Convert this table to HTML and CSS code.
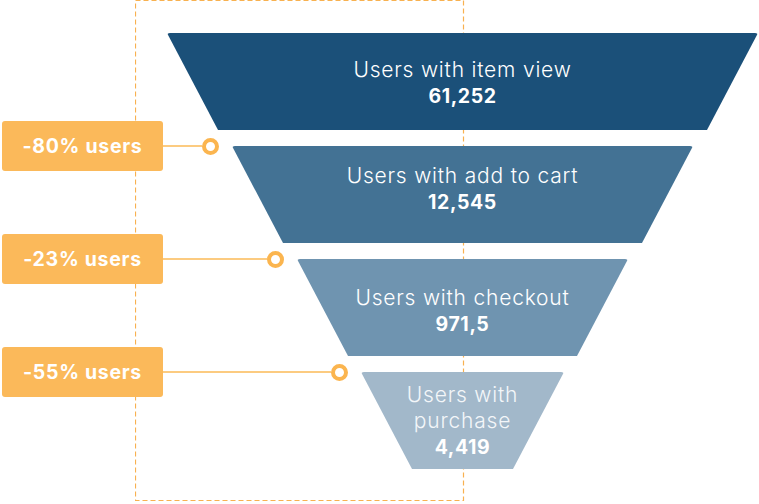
FILE: index.html
```html
<!DOCTYPE html>
<html lang="en">
<head>
<meta charset="utf-8">
<title>Funnel</title>
<link rel="stylesheet" href="styles.css">
</head>
<body>
<div class="chart">
  <svg class="frame" width="330" height="504" viewBox="0 0 330 504">
    <rect x="0.5" y="0.5" width="328" height="500" fill="none" stroke="#F8B150" stroke-width="1.2" stroke-dasharray="5 3"/>
  </svg>
  <div class="stages">
    <div class="stage s1"><div class="label">Users with item view</div><div class="value">61,252</div></div>
    <div class="gap">
      <div class="callout c1"><div class="tag">-80% users</div><div class="line"></div><div class="dot"></div></div>
    </div>
    <div class="stage s2"><div class="label">Users with add to cart</div><div class="value">12,545</div></div>
    <div class="gap">
      <div class="callout c2"><div class="tag">-23% users</div><div class="line"></div><div class="dot"></div></div>
    </div>
    <div class="stage s3"><div class="label">Users with checkout</div><div class="value">971,5</div></div>
    <div class="gap">
      <div class="callout c3"><div class="tag">-55% users</div><div class="line"></div><div class="dot"></div></div>
    </div>
    <div class="stage s4"><div class="label">Users with<br>purchase</div><div class="value">4,419</div></div>
  </div>
</div>
</body>
</html>
```
FILE: styles.css
```css
html, body {
  margin: 0;
  padding: 0;
  background: #ffffff;
}
.chart {
  position: relative;
  width: 759px;
  height: 504px;
  overflow: hidden;
  font-family: Inter, "Noto Sans", "DejaVu Sans", sans-serif;
}
.frame {
  position: absolute;
  left: 135px;
  top: 0;
}
.stages {
  position: relative;
  display: flex;
  flex-direction: column;
  padding-top: 33px;
}
.stage {
  height: 97px;
  box-sizing: border-box;
  display: flex;
  flex-direction: column;
  align-items: center;
  justify-content: center;
  color: #ffffff;
  text-align: center;
  clip-path: polygon(0 0, 100% 0, calc(100% - 51px) 100%, 51px 100%);
  border-radius: 3px;
}
.label {
  font-size: 21px;
  font-weight: 300;
  line-height: 26px;
  letter-spacing: 0.8px;
}
.value {
  font-size: 19.5px;
  font-weight: 700;
  line-height: 26px;
  letter-spacing: 0.6px;
}
.s1 { margin-left: 167px; width: 591px; background: #1B5079; padding-top: 2px; }
.s2 { margin-left: 232px; width: 461px; background: #437294; padding-bottom: 12px; }
.s3 { margin-left: 297px; width: 331px; background: #6F94B0; padding-top: 7px; }
.s4 { margin-left: 361px; width: 203px; background: #A2B8CA; padding-top: 1px; }
.s4 .label { color: #F3F6F9; }
.gap {
  height: 16px;
  display: flex;
  flex-direction: column;
  justify-content: flex-end;
}
.callout {
  height: 0;
  display: flex;
  align-items: center;
  padding-left: 2px;
  box-sizing: border-box;
}
.c1 { width: 219px; }
.c2 { width: 284px; }
.c3 { width: 348px; }
.tag {
  flex-shrink: 0;
  width: 161px;
  height: 50px;
  background: #FBB95A;
  border-radius: 3px;
  color: #ffffff;
  font-size: 19.5px;
  font-weight: 700;
  display: flex;
  align-items: center;
  justify-content: center;
  letter-spacing: 0.7px;
}
.line {
  flex: 1;
  height: 1.5px;
  background: #FCCB80;
}
.dot {
  flex-shrink: 0;
  width: 17px;
  height: 17px;
  box-sizing: border-box;
  border: 4.5px solid #FBB54F;
  border-radius: 50%;
  background: #ffffff;
}
```
